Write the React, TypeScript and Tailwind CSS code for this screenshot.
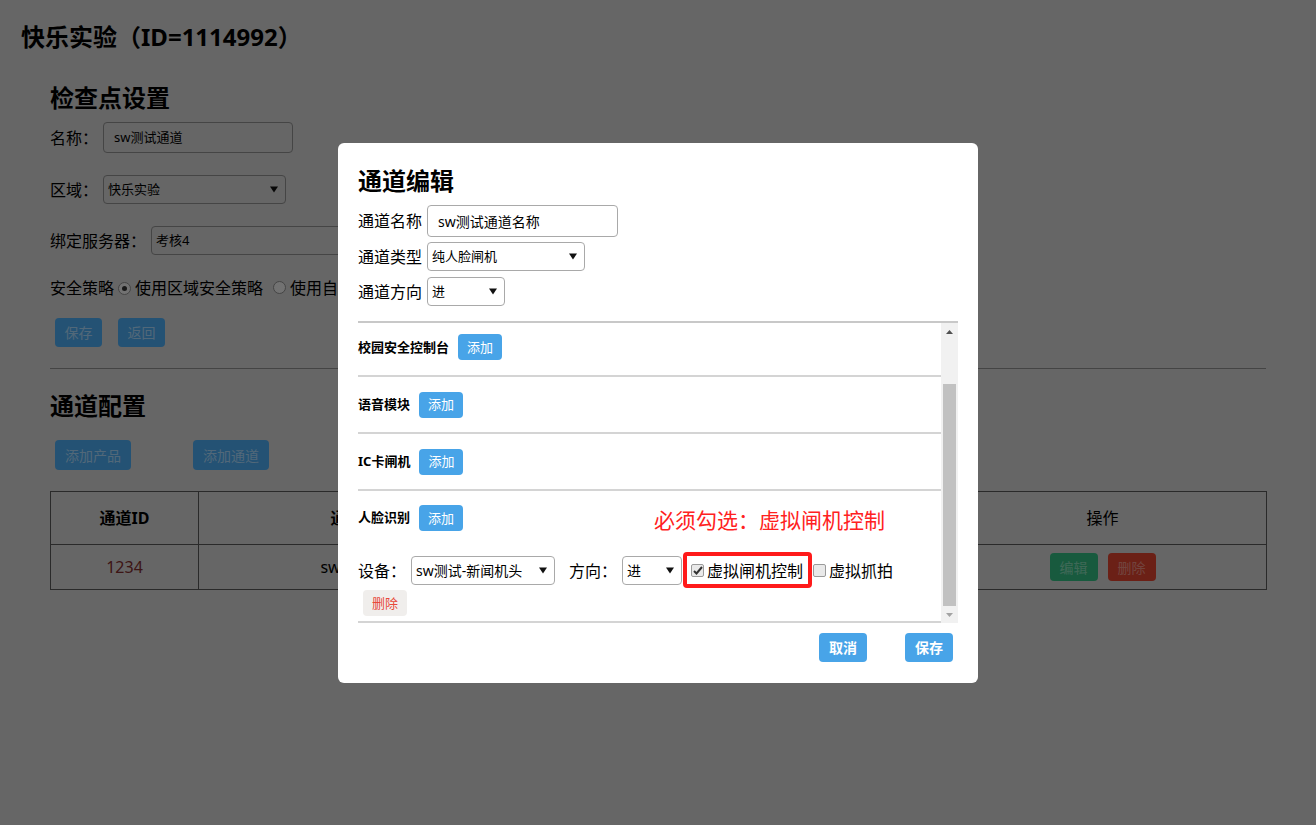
import React from 'react';

const FONT = "[font-family:'Noto_Sans','Noto_Sans_CJK_SC',sans-serif]";

const Arrow: React.FC = () => (
  <svg width="8" height="7" viewBox="0 0 8 7" className="shrink-0">
    <path d="M0 0.5h8L4 6.5z" fill="#111" />
  </svg>
);

const Select: React.FC<{ value: string; className?: string; textClass?: string }> = ({ value, className = '', textClass = 'text-[13px]' }) => (
  <div className={`flex items-center justify-between border border-[#a9a9a9] rounded-[4px] pl-[4px] pr-[7px] bg-white ${className}`}>
    <span className={`${textClass} leading-none`}>{value}</span>
    <Arrow />
  </div>
);

const AddButton: React.FC = () => (
  <button className="ml-[9px] h-[26px] w-[44px] rounded-[4px] bg-[#48a4e8] text-white text-[13px] leading-none">添加</button>
);

const CheckBox: React.FC<{ checked?: boolean }> = ({ checked }) => (
  <span className="inline-flex items-center justify-center w-[13px] h-[13px] rounded-[2px] border border-[#9a9a9a] bg-[#e9e9e9]">
    {checked && (
      <svg width="10" height="9" viewBox="0 0 10 9">
        <path d="M1 5l2.5 2.5L9 1" stroke="#333" strokeWidth="2" fill="none" />
      </svg>
    )}
  </span>
);

const Radio: React.FC<{ checked?: boolean }> = ({ checked }) => (
  <span className="inline-flex items-center justify-center w-[13px] h-[13px] rounded-full border border-[#8a8a8a] bg-[#e4e4e4]">
    {checked && <span className="w-[5px] h-[5px] rounded-full bg-[#333]" />}
  </span>
);

// background page: checkpoint settings + channel table
const Page: React.FC = () => (
  <div className="pl-[21px] pt-[22px]">
    <h1 className="text-[24px] leading-[30px] font-bold">快乐实验（ID=1114992）</h1>
    <div className="ml-[29px] w-[1216px]">
      <h2 className="mt-[31px] text-[24px] leading-[30px] font-bold">检查点设置</h2>

      <div className="mt-[9px] flex items-center h-[31px] text-[16px]">
        <span className="w-[53px]">名称：</span>
        <div className="h-[31px] w-[190px] border border-[#8a8a8a] rounded-[4px] flex items-center pl-[10px] text-[13px]">sw测试通道</div>
      </div>

      <div className="mt-[22px] flex items-center h-[29px] text-[16px]">
        <span className="w-[53px]">区域：</span>
        <div className="h-[29px] w-[183px] border border-[#8a8a8a] rounded-[4px] flex items-center justify-between pl-[4px] pr-[7px]">
          <span className="text-[13px]">快乐实验</span>
          <Arrow />
        </div>
      </div>

      <div className="mt-[22px] flex items-center h-[29px] text-[16px]">
        <span className="w-[101px]">绑定服务器：</span>
        <div className="h-[29px] w-[420px] border border-[#8a8a8a] rounded-[4px] flex items-center pl-[4px] text-[13px]">考核4</div>
      </div>

      <div className="mt-[23px] flex items-center h-[20px] text-[16px] gap-[4px]">
        <span>安全策略</span>
        <Radio checked />
        <span>使用区域安全策略</span>
        <span className="ml-[6px]"><Radio /></span>
        <span>使用自定义安全策略</span>
      </div>

      <div className="mt-[20px] ml-[5px] flex gap-[16px]">
        <button className="h-[29px] w-[47px] rounded-[4px] bg-[#48a4e8] text-white/50 text-[14px]">保存</button>
        <button className="h-[29px] w-[47px] rounded-[4px] bg-[#48a4e8] text-white/50 text-[14px]">返回</button>
      </div>

      <div className="mt-[21px] border-t border-[#888]" />

      <h2 className="mt-[22px] text-[24px] leading-[30px] font-bold">通道配置</h2>

      <div className="mt-[19px] ml-[5px] flex gap-[62px]">
        <button className="h-[30px] w-[76px] rounded-[4px] bg-[#48a4e8] text-white/50 text-[14px]">添加产品</button>
        <button className="h-[30px] w-[76px] rounded-[4px] bg-[#48a4e8] text-white/50 text-[14px]">添加通道</button>
      </div>

      <table className="mt-[21px] w-[1216px] border-collapse text-[16px] table-fixed">
        <colgroup>
          <col className="w-[148px]" />
          <col className="w-[328px]" />
          <col className="w-[412px]" />
          <col className="w-[328px]" />
        </colgroup>
        <thead>
          <tr className="h-[53px]">
            <th className="border border-[#555] font-bold">通道ID</th>
            <th className="border border-[#555] font-bold">通道名称</th>
            <th className="border border-[#555] font-bold">检查点</th>
            <th className="border border-[#555] font-normal">操作</th>
          </tr>
        </thead>
        <tbody>
          <tr className="h-[45px]">
            <td className="border border-[#555] text-center text-[#7a2a2a]">1234</td>
            <td className="border border-[#555] text-center">sw测试通道</td>
            <td className="border border-[#555] text-center">快乐实验</td>
            <td className="border border-[#555]">
              <div className="flex justify-center gap-[10px]">
                <button className="h-[28px] w-[48px] rounded-[4px] bg-[#30b57c] text-white/40 text-[14px]">编辑</button>
                <button className="h-[28px] w-[48px] rounded-[4px] bg-[#d6402c] text-white/40 text-[14px]">删除</button>
              </div>
            </td>
          </tr>
        </tbody>
      </table>
    </div>
  </div>
);

const Scrollbar: React.FC = () => (
  <div className="w-[17px] bg-[#f1f1f1] flex flex-col items-center">
    <div className="h-[17px] flex items-center justify-center">
      <svg width="7" height="4" viewBox="0 0 7 4"><path d="M0 4h7L3.5 0z" fill="#505050" /></svg>
    </div>
    <div className="mt-[44px] h-[222px] w-[13px] bg-[#c1c1c1]" />
    <div className="h-[17px] flex items-center justify-center">
      <svg width="7" height="4" viewBox="0 0 7 4"><path d="M0 0h7L3.5 4z" fill="#a3a3a3" /></svg>
    </div>
  </div>
);

const ChannelEditor: React.FC = () => (
  <div className="w-[640px] h-[540px] bg-white rounded-[6px] px-[20px] pt-[23px] text-black">
    <h3 className="text-[24px] leading-[30px] font-bold">通道编辑</h3>

    <div className="mt-[9px] flex items-center h-[32px]">
      <span className="text-[16px] w-[69px]">通道名称</span>
      <div className="h-[32px] w-[191px] border border-[#a9a9a9] rounded-[4px] flex items-center pl-[10px] text-[14px]">sw测试通道名称</div>
    </div>
    <div className="mt-[5px] flex items-center h-[29px]">
      <span className="text-[16px] w-[69px]">通道类型</span>
      <Select value="纯人脸闸机" className="h-[29px] w-[158px]" />
    </div>
    <div className="mt-[6px] flex items-center h-[29px]">
      <span className="text-[16px] w-[69px]">通道方向</span>
      <Select value="进" className="h-[29px] w-[78px]" />
    </div>

    <div className="mt-[15px] h-[302px] border-t-2 border-[#c8c8c8] flex">
      <div className="flex-1 flex flex-col">
        <div className="h-[54px] border-b-2 border-[#d4d4d4] flex items-start pt-[11px]">
          <span className="text-[13px] font-bold leading-[26px]">校园安全控制台</span>
          <AddButton />
        </div>
        <div className="h-[57px] border-b-2 border-[#d4d4d4] flex items-center">
          <span className="text-[13px] font-bold">语音模块</span>
          <AddButton />
        </div>
        <div className="h-[57px] border-b-2 border-[#d4d4d4] flex items-center">
          <span className="text-[13px] font-bold">IC卡闸机</span>
          <AddButton />
        </div>
        <div className="relative h-[132px] border-b-2 border-[#d4d4d4] pt-[14px]">
          <div className="flex items-center">
            <span className="text-[13px] font-bold">人脸识别</span>
            <AddButton />
          </div>
          <span className="absolute left-[296px] top-[16px] text-[21px] leading-[26px] text-[#ff2121]">必须勾选：虚拟闸机控制</span>

          <div className="mt-[25px] flex items-center h-[29px] text-[16px]">
            <span>设备：</span>
            <Select value="sw测试-新闻机头" textClass="text-[14px]" className="ml-[5px] h-[29px] w-[144px]" />
            <span className="ml-[14px]">方向：</span>
            <Select value="进" textClass="text-[14px]" className="ml-[5px] h-[29px] w-[60px]" />
            <span className="relative ml-[9px] flex items-center gap-[3px]">
              <span className="absolute -left-[8px] -right-[9px] -top-[7px] -bottom-[5px] border-4 border-[#ff1a1a] rounded-[4px]" />
              <CheckBox checked />
              <span>虚拟闸机控制</span>
            </span>
            <span className="ml-[10px] flex items-center gap-[3px]">
              <CheckBox />
              <span>虚拟抓拍</span>
            </span>
          </div>
          <button className="mt-[5px] ml-[5px] h-[26px] w-[44px] rounded-[4px] bg-[#f0eeec] text-[#e8483a] text-[13px] leading-none">删除</button>
        </div>
      </div>
      <Scrollbar />
    </div>

    <div className="mt-[10px] mr-[5px] flex justify-end gap-[38px]">
      <button className="h-[29px] w-[48px] rounded-[4px] bg-[#48a4e8] text-white text-[14px] font-bold">取消</button>
      <button className="h-[29px] w-[48px] rounded-[4px] bg-[#48a4e8] text-white text-[14px] font-bold">保存</button>
    </div>
  </div>
);

export default function App() {
  return (
    <div className={`relative h-[825px] w-full overflow-hidden bg-[#ccc] text-black ${FONT}`}>
      <Page />
      <div className="absolute inset-0 bg-black/50 flex justify-center pt-[143px]">
        <ChannelEditor />
      </div>
    </div>
  );
}
